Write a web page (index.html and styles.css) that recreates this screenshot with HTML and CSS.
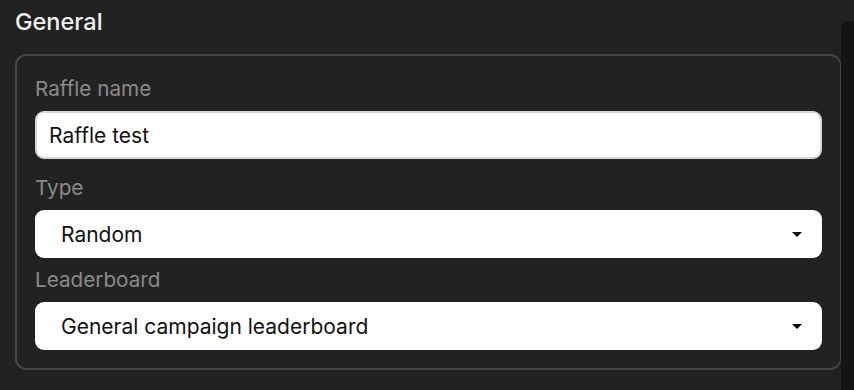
FILE: index.html
```html
<!DOCTYPE html>
<html>
<head>
<meta charset="utf-8">
<link rel="stylesheet" href="styles.css">
</head>
<body>
<div class="page">
  <main class="main">
    <h2 class="title">General</h2>
    <section class="card">
      <div class="field">
        <label class="label">Raffle name</label>
        <div class="input">Raffle test</div>
      </div>
      <div class="field">
        <label class="label">Type</label>
        <div class="select"><span>Random</span><span class="caret"></span></div>
      </div>
      <div class="field">
        <label class="label">Leaderboard</label>
        <div class="select"><span>General campaign leaderboard</span><span class="caret"></span></div>
      </div>
    </section>
  </main>
  <div class="scrollbar"></div>
</div>
</body>
</html>
```
FILE: styles.css
```css
html, body {
  margin: 0;
  padding: 0;
  background: #222222;
  height: 100%;
}
body {
  font-family: Inter, "Noto Sans", sans-serif;
  overflow: hidden;
}
.page {
  display: flex;
  height: 390px;
}
.main {
  flex: 1;
  padding-left: 15px;
}
.title {
  margin: 0;
  padding-top: 8px;
  font-size: 23.5px;
  line-height: 28px;
  font-weight: 500;
  color: #f2f2f2;
}
.card {
  margin-top: 18px;
  border: 2px solid #464646;
  border-right-width: 1px;
  border-radius: 11px;
  padding: 21px 18px 18px 18px;
  display: flex;
  flex-direction: column;
  gap: 10px;
}
.field {
  display: flex;
  flex-direction: column;
  gap: 10px;
}
.label {
  font-size: 20.7px;
  line-height: 24px;
  color: #8a8a8a;
}
.input {
  box-sizing: border-box;
  height: 48px;
  background: #fff;
  border: 2px solid #d6d6d6;
  border-radius: 9px;
  padding: 0 12px;
  display: flex;
  align-items: center;
  font-size: 21px;
  color: #111;
  margin-bottom: 7px;
}
.select {
  box-sizing: border-box;
  height: 48px;
  background: #fff;
  border-radius: 9px;
  padding: 0 20px 0 26px;
  display: flex;
  align-items: center;
  justify-content: space-between;
  font-size: 21px;
  color: #111;
}
.caret {
  width: 0;
  height: 0;
  border-left: 5.5px solid transparent;
  border-right: 5.5px solid transparent;
  border-top: 5.5px solid #000;
}
.scrollbar {
  width: 13px;
  margin-top: 21px;
  background: #141414;
  border-top-left-radius: 7px;
}
```
